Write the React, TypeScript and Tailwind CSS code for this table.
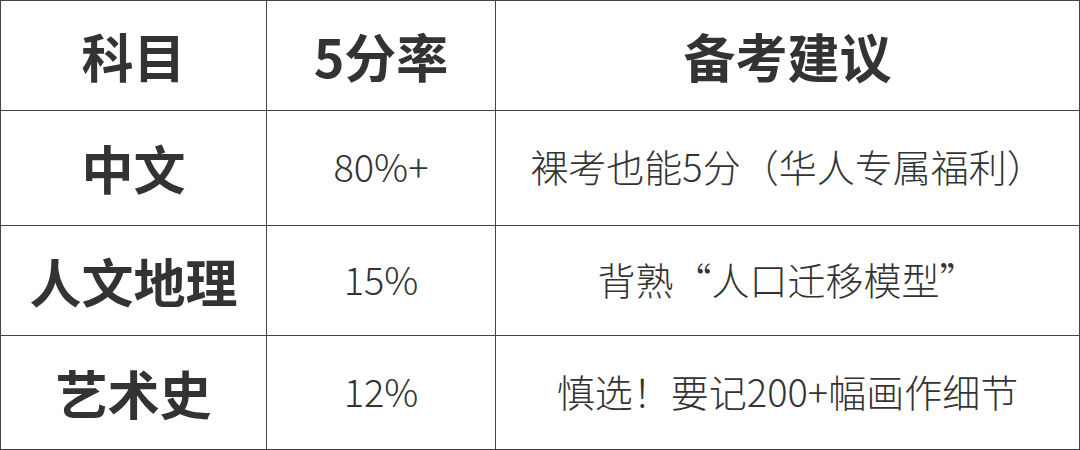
import React from "react";

const rows = [
  { subject: "中文", rate: "80%+", tip: "裸考也能5分（华人专属福利）", h: "h-[115px]" },
  { subject: "人文地理", rate: "15%", tip: "背熟“人口迁移模型”", h: "h-[110px]" },
  { subject: "艺术史", rate: "12%", tip: "慎选！要记200+幅画作细节", h: "h-[114px]" },
];

export default function App() {
  return (
    <div
      className="w-[1080px] h-[450px] bg-white text-[#333333] overflow-hidden"
      style={{ fontFamily: '"Noto Sans CJK SC", "Noto Sans", sans-serif' }}
    >
      <table className="w-[1080px] border-collapse table-fixed">
        <colgroup>
          <col className="w-[266px]" />
          <col className="w-[229px]" />
          <col />
        </colgroup>
        <thead>
          <tr className="h-[110px]">
            <th className="border border-[#444444] text-[52px] font-bold text-center align-middle leading-none">科目</th>
            <th className="border border-[#444444] text-[52px] font-bold text-center align-middle leading-none">5分率</th>
            <th className="border border-[#444444] text-[52px] font-bold text-center align-middle leading-none">备考建议</th>
          </tr>
        </thead>
        <tbody>
          {rows.map((r) => (
            <tr key={r.subject} className={r.h}>
              <td className="border border-[#444444] text-[52px] font-bold text-center align-middle leading-none">{r.subject}</td>
              <td className="border border-[#444444] text-[38px] font-light text-center align-middle leading-none pb-[4px]">{r.rate}</td>
              <td className="border border-[#444444] text-[38px] font-light text-center align-middle leading-none pb-[4px]">{r.tip}</td>
            </tr>
          ))}
        </tbody>
      </table>
    </div>
  );
}
